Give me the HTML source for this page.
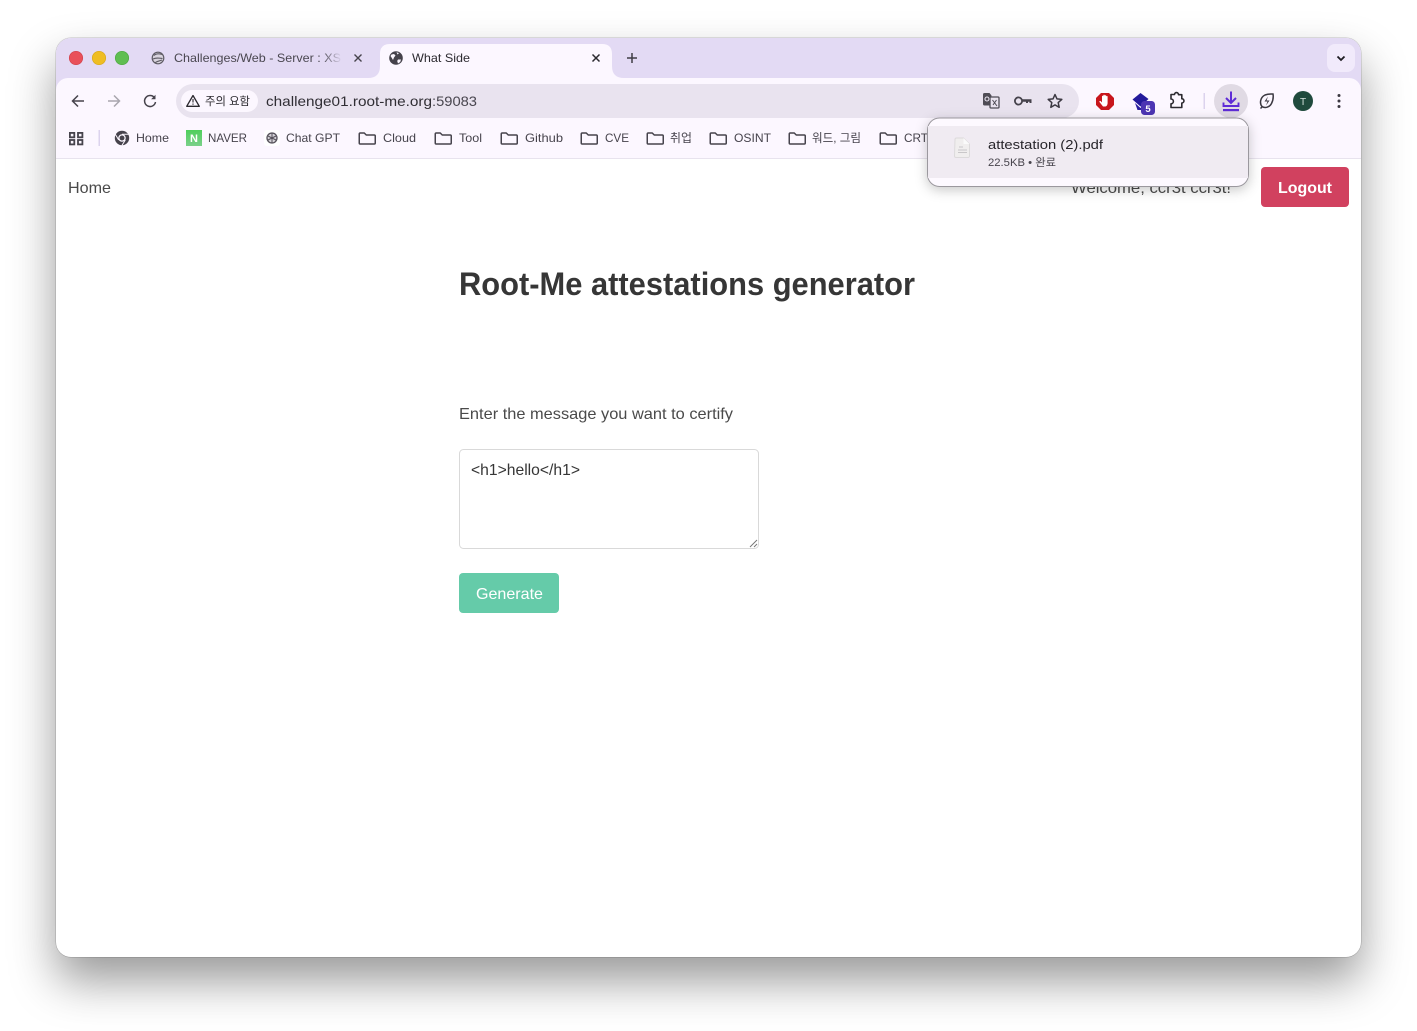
<!DOCTYPE html>
<html><head><meta charset="utf-8"><style>
html,body{margin:0;padding:0;background:#fff;width:1417px;height:1031px;overflow:hidden}
#win{position:absolute;left:56px;top:38px;width:1305px;height:919px;border-radius:15px;background:#fff;box-shadow:0 24px 46px rgba(0,0,0,.40),0 0 0 .5px rgba(0,0,0,.22)}
svg{position:absolute;left:0;top:0}
text{font-family:"Liberation Sans","Noto Sans CJK KR",sans-serif}
.bm{font-size:12px;fill:#46434c}
.f{fill:none;stroke:#46434c;stroke-width:1.5;stroke-linejoin:round}
</style></head><body>
<div id="win"></div>
<svg width="1417" height="1031" viewBox="0 0 1417 1031">
<defs>
<linearGradient id="fade" x1="0" x2="1"><stop offset="0" stop-color="#e3daf4" stop-opacity="0"/><stop offset="1" stop-color="#e3daf4"/></linearGradient>
<linearGradient id="nav" x1="0" x2="0" y1="0" y2="1"><stop offset="0" stop-color="#4fcf5c"/><stop offset="1" stop-color="#7bd08a"/></linearGradient>
<filter id="pop" x="-15%" y="-30%" width="130%" height="170%"><feDropShadow dx="0" dy="3" stdDeviation="6" flood-color="#000" flood-opacity=".22"/></filter>
</defs>
<!-- chrome -->
<path d="M56 159V53a15 15 0 0 1 15-15H1346a15 15 0 0 1 15 15V159Z" fill="#e3daf4"/>
<path d="M56 159V90a12 12 0 0 1 12-12H1349a12 12 0 0 1 12 12V159Z" fill="#fcf7ff"/>
<rect x="56" y="158" width="1305" height="1" fill="#e8e3ee"/>
<!-- traffic lights -->
<circle cx="76" cy="58" r="6.700" fill="#e9505a" stroke="#d2444e" stroke-width=".7"/>
<circle cx="99" cy="58" r="6.700" fill="#efbd23" stroke="#d9a91c" stroke-width=".7"/>
<circle cx="122" cy="58" r="6.700" fill="#5fbe51" stroke="#50a944" stroke-width=".7"/>
<!-- tab 1 -->
<circle cx="158" cy="58" r="5.800" fill="#d9d4de" stroke="#5e5b64" stroke-width="1.200"/>
<path d="M154 55.500c2-2 5-2 8-1M153 59c3-1.500 6-1 9.500-.5M155 63c2-2 5-2 7-3" fill="none" stroke="#5e5b64" stroke-width="1.100"/>
<text x="174" y="62" font-size="12" fill="#4a4750" textLength="167" lengthAdjust="spacingAndGlyphs">Challenges/Web - Server : XS</text>
<rect x="322" y="48" width="20" height="20" fill="url(#fade)"/>
<path d="M354.500 54.500l7 7M361.500 54.500l-7 7" stroke="#46434c" stroke-width="1.400"/>
<!-- active tab -->
<path d="M368 78Q380 78 380 66V54Q380 44 390 44H602Q612 44 612 54V66Q612 78 624 78Z" fill="#fcf7ff"/>
<circle cx="396" cy="58" r="6.800" fill="#45424b"/>
<path d="M391.500 54.500l2.500-.5 1.500 1.500-1.500 2-1 2.500-1.500-2.500-1-1.500zM398 59.500l3 0-.8 2.500-2.200 1.500-.8-2.500zM396.500 52.300l2.500.8-1.500 1.400z" fill="#fcf7ff"/>
<text x="412" y="62" font-size="12" fill="#2c2a30" textLength="58" lengthAdjust="spacingAndGlyphs">What Side</text>
<path d="M592.500 54.500l7 7M599.500 54.500l-7 7" stroke="#2c2a30" stroke-width="1.500"/>
<path d="M632 53v10M627 58h10" stroke="#3f3c45" stroke-width="1.500"/>
<!-- tab dropdown -->
<rect x="1327" y="44" width="28" height="28" rx="8" fill="#f1eafb"/>
<path d="M1337.500 56.500l3.500 3.500 3.500-3.500" fill="none" stroke="#1e1c22" stroke-width="1.800"/>
<!-- nav icons -->
<path d="M84 101H73M78 95.500L72.500 101l5.500 5.500" fill="none" stroke="#46434c" stroke-width="1.500"/>
<path d="M108 101h11M114 95.500l5.500 5.500-5.500 5.500" fill="none" stroke="#a9a6ae" stroke-width="1.500"/>
<path d="M154.300 97.500A5.500 5.500 0 1 0 155.500 102" fill="none" stroke="#46434c" stroke-width="1.500"/>
<path d="M155.500 94.800v4.400h-4.400z" fill="#46434c"/>
<!-- address bar -->
<rect x="176" y="84" width="903" height="34" rx="17" fill="#e9e3ef"/>
<rect x="181" y="90" width="77" height="22" rx="11" fill="#fcf7ff"/>
<path d="M193 95.500l6.300 10.800h-12.600z" fill="none" stroke="#2a282e" stroke-width="1.300" stroke-linejoin="round"/>
<path d="M193 99v3.500M193 103.500v1.200" stroke="#2a282e" stroke-width="1.100"/>
<text x="205" y="105" font-size="11.500" fill="#2a282e" textLength="45" lengthAdjust="spacingAndGlyphs">주의 요함</text>
<text x="266" y="106" font-size="14" fill="#302e34" textLength="166" lengthAdjust="spacingAndGlyphs">challenge01.root-me.org</text>
<text x="432" y="106" font-size="14" fill="#48454e" textLength="45" lengthAdjust="spacingAndGlyphs">:59083</text>
<!-- address right icons -->
<path d="M983 94.500a1.500 1.500 0 0 1 1.500-1.500h5l2 2.500v10h-7a1.500 1.500 0 0 1-1.500-1.500z" fill="#4f4c55"/>
<rect x="990" y="97" width="9" height="11" rx="1" fill="#e9e3ef" stroke="#4f4c55" stroke-width="1.300"/>
<circle cx="987" cy="99" r="2" fill="none" stroke="#e9e3ef" stroke-width="1.100"/>
<path d="M992.500 100l4.500 6M996.500 100l-3.500 5" stroke="#4f4c55" stroke-width="1"/>
<circle cx="1018.500" cy="101" r="3.600" fill="none" stroke="#46434c" stroke-width="1.800"/>
<path d="M1022 99.200h9.500v3.800h-2v-1.200h-1.500v1.200h-2v-1.200h-4z" fill="#46434c"/>
<path d="M1055 94.500l2 4.400 4.800.5-3.600 3.200 1 4.700-4.200-2.400-4.200 2.400 1-4.700-3.600-3.200 4.800-.5z" fill="none" stroke="#3c3942" stroke-width="1.500" stroke-linejoin="round"/>
<!-- extensions -->
<path d="M1101 93h8l5 5v7l-5 5h-8l-5-5v-7z" fill="#c8161c"/>
<path d="M1103 106.500l-3.500-4.500c-.5-1 .8-1.500 1.300-.7l1.200 1.200V96.500c0-1 1.300-1 1.300 0v-1c0-1 1.500-1 1.500 0v.5c0-1 1.500-1 1.500 0v.7c0-.9 1.300-.9 1.300 0v6.300c0 1.500-.8 3.500-2.300 3.500z" fill="#fff"/>
<path d="M1132.500 99.500l8-6.500 8 6-8 7.500z" fill="#231a9b"/>
<path d="M1135 103l5.500 5 3-2v4h-6z" fill="#2a1fa0"/>
<rect x="1141" y="101" width="14" height="14" rx="3.500" fill="#4c35b3"/>
<text x="1148" y="112" font-size="9.500" font-weight="700" fill="#fff" text-anchor="middle">5</text>
<path d="M1171 94.500h3.500a2 2 0 0 1 4 .2h3.300v4a2 2 0 0 1 0 4.300v4.500h-10.800v-3.700a2.300 2.300 0 0 0 0-4.800z" fill="none" stroke="#2c2a30" stroke-width="1.600" stroke-linejoin="round"/>
<rect x="1203.500" y="93" width="1.500" height="16" fill="#dcd3ee"/>
<circle cx="1231" cy="101" r="17" fill="#e0dae4"/>
<path d="M1231 91.500v11M1226 98l5 5 5-5" fill="none" stroke="#5f2cd6" stroke-width="2"/>
<path d="M1223.500 102.500v3.500h15v-3.500" fill="none" stroke="#5f2cd6" stroke-width="1.900"/>
<rect x="1223" y="109" width="16" height="2.200" fill="#5f2cd6"/>
<path d="M1262 106.500c-2.500-3-2-9 3-11.500 2.500-1 5-1.200 8-1 .5 3-.2 7-1.500 9.500-2 3.800-6.500 5-9.500 3zM1260.500 108.500l2-2" fill="none" stroke="#3b3841" stroke-width="1.500"/>
<path d="M1268 96.500l-3.500 5h3l-1.500 4 3.500-5h-3z" fill="#3b3841"/>
<circle cx="1303" cy="101" r="10" fill="#1f4a3d"/>
<text x="1303" y="105" font-size="10" fill="#d5e3dd" text-anchor="middle">T</text>
<circle cx="1339" cy="95.500" r="1.500" fill="#3b3841"/><circle cx="1339" cy="101" r="1.500" fill="#3b3841"/><circle cx="1339" cy="106.500" r="1.500" fill="#3b3841"/>
<!-- bookmarks -->
<g fill="none" stroke="#46434c" stroke-width="1.800"><rect x="69.900" y="132.900" width="4.400" height="4.400"/><rect x="78" y="132.900" width="4.400" height="4.400"/><rect x="69.900" y="140" width="4.400" height="4.400"/><rect x="78" y="140" width="4.400" height="4.400"/></g>
<rect x="98.500" y="130" width="1.500" height="16" fill="#dcd3ee"/>
<circle cx="122" cy="138" r="7.200" fill="#46434c"/><circle cx="122" cy="138" r="3.800" fill="#fcf7ff"/><circle cx="122" cy="138" r="2.500" fill="#46434c"/>
<path d="M122 134.200h6.800M118.700 140l-3.400-5.800M125.300 140l-3.400 5.500" stroke="#fcf7ff" stroke-width="1"/>
<text class="bm" x="136" y="142" textLength="33" lengthAdjust="spacingAndGlyphs">Home</text>
<rect x="186" y="130" width="16" height="16" fill="url(#nav)"/>
<text x="194" y="142" font-size="11" font-weight="700" fill="#fff" text-anchor="middle">N</text>
<text class="bm" x="208" y="142" textLength="39" lengthAdjust="spacingAndGlyphs">NAVER</text>
<rect x="264" y="130" width="16" height="16" rx="3" fill="#fff"/>
<circle cx="272" cy="138" r="5" fill="#d5d3d8" stroke="#55525a" stroke-width="1.300"/><path d="M268 136l8 4M276 136l-8 4M272 133v10" stroke="#55525a" stroke-width="1"/>
<text class="bm" x="286" y="142" textLength="54" lengthAdjust="spacingAndGlyphs">Chat GPT</text>
<path id="fd" class="f" d="M359.250 134a1 1 0 0 1 1-1h4l2 2h8a1 1 0 0 1 1 1v7a1 1 0 0 1-1 1h-14a1 1 0 0 1-1-1z"/>
<text class="bm" x="383" y="142" textLength="33" lengthAdjust="spacingAndGlyphs">Cloud</text>
<use href="#fd" x="76"/><text class="bm" x="459" y="142" textLength="23" lengthAdjust="spacingAndGlyphs">Tool</text>
<use href="#fd" x="142"/><text class="bm" x="525" y="142" textLength="38" lengthAdjust="spacingAndGlyphs">Github</text>
<use href="#fd" x="222"/><text class="bm" x="605" y="142" textLength="24" lengthAdjust="spacingAndGlyphs">CVE</text>
<use href="#fd" x="288"/><text class="bm" x="670" y="142" textLength="22" lengthAdjust="spacingAndGlyphs">취업</text>
<use href="#fd" x="351"/><text class="bm" x="734" y="142" textLength="37" lengthAdjust="spacingAndGlyphs">OSINT</text>
<use href="#fd" x="430"/><text class="bm" x="812" y="142" textLength="49" lengthAdjust="spacingAndGlyphs">워드, 그림</text>
<use href="#fd" x="521"/><text class="bm" x="904" y="142" textLength="24" lengthAdjust="spacingAndGlyphs">CRT</text>
<!-- page -->
<text x="68" y="193" font-size="16" fill="#4a4a4a" textLength="43" lengthAdjust="spacingAndGlyphs">Home</text>
<text x="1071" y="193" font-size="16" fill="#4a4a4a" textLength="160" lengthAdjust="spacingAndGlyphs">Welcome, ccr3t ccr3t!</text>
<rect x="1261" y="167" width="88" height="40" rx="4" fill="#d1415f"/>
<text x="1278" y="193" font-size="16" font-weight="700" fill="#fff" textLength="54" lengthAdjust="spacingAndGlyphs">Logout</text>
<text x="459" y="295" font-size="32" font-weight="700" fill="#363636" textLength="456" lengthAdjust="spacingAndGlyphs">Root-Me attestations generator</text>
<text x="459" y="419" font-size="16" fill="#4a4a4a" textLength="274" lengthAdjust="spacingAndGlyphs">Enter the message you want to certify</text>
<rect x="459.500" y="449.500" width="299" height="99" rx="4" fill="#fff" stroke="#d9d9d9"/>
<text x="471" y="475" font-size="16" fill="#363636" textLength="109" lengthAdjust="spacingAndGlyphs">&lt;h1&gt;hello&lt;/h1&gt;</text>
<path d="M750 547l7-7M754 547l3-3" stroke="#777" stroke-width="1"/>
<rect x="459" y="573" width="100" height="40" rx="4" fill="#65cba9"/>
<text x="476" y="599" font-size="16" fill="#fff" textLength="67" lengthAdjust="spacingAndGlyphs">Generate</text>
<!-- popup -->
<rect x="927.500" y="118" width="321" height="68.500" rx="12" fill="#fdf9ff" stroke="#9b989e" filter="url(#pop)"/>
<rect x="928" y="126" width="320" height="52" fill="#f0ebf2"/>
<path d="M955 139.500a1.500 1.500 0 0 1 1.500-1.500h7l6 6v12a1.500 1.500 0 0 1-1.500 1.500h-12a1.500 1.500 0 0 1-1.500-1.500z" fill="#f0eeee" stroke="#dcdadb" stroke-width="1"/>
<path d="M963.500 138v6h6z" fill="#fafafa"/>
<path d="M959 147h4M958 150h9M958 152.500h9" stroke="#c9c7c9" stroke-width="1"/>
<text x="988" y="149" font-size="13" fill="#27252b" textLength="115" lengthAdjust="spacingAndGlyphs">attestation (2).pdf</text>
<text x="988" y="166" font-size="11" fill="#47444c" textLength="68" lengthAdjust="spacingAndGlyphs">22.5KB • 완료</text>
</svg>
</body></html>
